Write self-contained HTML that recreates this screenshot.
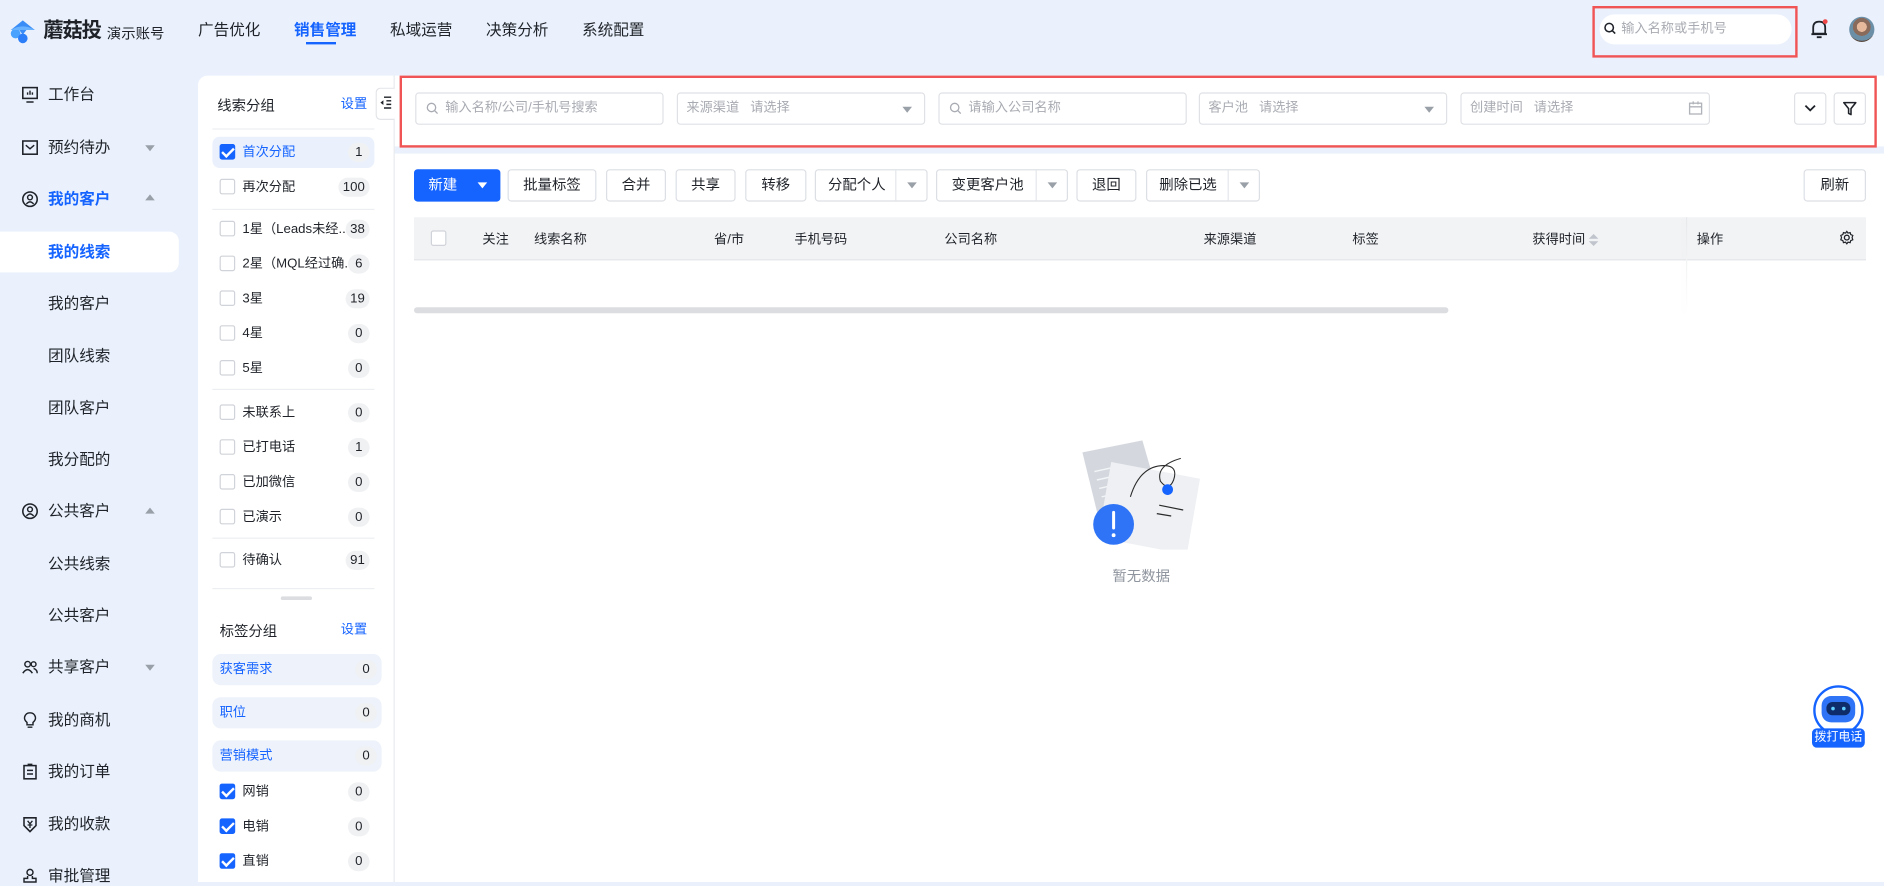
<!DOCTYPE html>
<html><head><meta charset="utf-8">
<style>
*{box-sizing:border-box;margin:0;padding:0}
html,body{width:1884px;height:882px;overflow:hidden;background:#eaf1fc}
body{font-family:"Liberation Sans","Noto Sans CJK SC",sans-serif;color:#1f2329}
#w{position:absolute;left:0;top:0;width:1570px;height:735px;transform:scale(1.2);transform-origin:0 0;font-size:12px}
.a{position:absolute}
.nav{position:absolute;top:16px;font-size:13px;color:#1f2329;line-height:18px}
.side{position:absolute;left:40px;font-size:13px;color:#1f2329;line-height:16px}
.sico{position:absolute;left:18px;width:14px;height:14px;margin-top:1px}
.caret{position:absolute;left:121px;width:0;height:0;border-left:4px solid transparent;border-right:4px solid transparent}
.li{position:absolute;left:177px;width:135px;height:26px}
.cb{position:absolute;left:6px;top:6px;width:13px;height:13px;border:1px solid #d0d3d9;border-radius:2px;background:#fff}
.cb.on{background:#1664ff;border-color:#1664ff}
.cb.on:after{content:"";position:absolute;left:3px;top:0px;width:4px;height:8px;border:solid #fff;border-width:0 2px 2px 0;transform:rotate(45deg)}
.li .t{position:absolute;left:25px;top:5px;font-size:11px;line-height:16px;color:#1f2329;white-space:nowrap}
.cnt{position:absolute;right:4px;top:5px;min-width:18px;height:16px;padding:0 4px;border-radius:8px;background:#f0f1f3;font-size:11px;text-align:center;line-height:16px;color:#1f2329}
.hr{position:absolute;left:177px;width:135px;height:1px;background:#eceef1}
.inp{position:absolute;top:77px;height:27px;border:1px solid #dfe1e5;border-radius:3px;background:#fff;font-size:11px;color:#a8abb2;line-height:25px}
.btn{position:absolute;top:141px;height:27px;border:1px solid #dcdfe4;border-radius:3px;background:#fff;font-size:12px;text-align:center;line-height:25px;color:#1f2329}
.dd{position:absolute;top:0;right:0;width:26px;height:25px;border-left:1px solid #e4e6ea}
.dd:after{content:"";position:absolute;left:9px;top:10px;border-left:4px solid transparent;border-right:4px solid transparent;border-top:5px solid #9aa0a8}
.th{position:absolute;top:193px;font-size:11px;line-height:14px;color:#1f2329}
.tag{position:absolute;left:177px;width:141px;height:26px;background:#edf2fb;border-radius:7px}
.tag .t{position:absolute;left:6px;top:5px;font-size:11px;line-height:16px;color:#1664ff}
</style></head><body><div id="w">
<svg class="a" style="left:7px;top:15px" width="26" height="22" viewBox="0 0 26 22"><path d="M2 10 L12 2 L22 10 L15 10 L12 14 L9 10Z" fill="#3a8cf6"/><circle cx="6" cy="13" r="4" fill="#4aa2ff"/><circle cx="12" cy="17" r="4" fill="#2c7ef8"/><path d="M2 10 Q12 4 22 10" fill="#68b2ff"/></svg>
<div class="a" style="left:36px;top:15px;font-size:17px;line-height:22px;font-weight:bold;color:#1f2329;letter-spacing:-1px">蘑菇投</div>
<div class="a" style="left:89px;top:20px;font-size:12px;line-height:16px;color:#1f2329">演示账号</div>
<div class="nav" style="left:165px">广告优化</div>
<div class="nav" style="left:245px;color:#1664ff;font-weight:bold">销售管理</div>
<div class="a" style="left:255px;top:35px;width:25px;height:2px;background:#1664ff"></div>
<div class="nav" style="left:325px">私域运营</div>
<div class="nav" style="left:405px">决策分析</div>
<div class="nav" style="left:485px">系统配置</div>
<div class="a" style="left:1327px;top:5px;width:171px;height:43px;border:2px solid #f05454"></div>
<div class="a" style="left:1333px;top:12px;width:160px;height:25px;border-radius:13px;background:#fff"></div>
<svg class="a" style="left:1336px;top:18px" width="12" height="12" viewBox="0 0 12 12"><circle cx="5" cy="5" r="3.5" fill="none" stroke="#1f2329" stroke-width="1.3"/><path d="M7.6 7.6 L10 10" stroke="#1f2329" stroke-width="1.3"/></svg>
<div class="a" style="left:1351px;top:17px;font-size:11px;line-height:14px;color:#a8abb2">输入名称或手机号</div>
<svg class="a" style="left:1508px;top:15px" width="16" height="18" viewBox="0 0 16 18"><path d="M3 13 L3 8 Q3 3 8 3 Q13 3 13 8 L13 13 Z M1.5 13.5 L14.5 13.5 M6 16 L10 16" fill="none" stroke="#1f2329" stroke-width="1.5"/><circle cx="13" cy="3" r="2" fill="#f04848"/></svg>
<div class="a" style="left:1541px;top:14px;width:21px;height:21px;border-radius:50%;background:radial-gradient(circle at 50% 40%,#e6b89c 0 25%,#8a6a5a 26% 45%,#6c8fa8 46% 70%,#5a4a3e 71%)"></div>
<svg class="sico" style="top:71px" viewBox="0 0 14 14"><rect x="1" y="1" width="12" height="9" fill="none" stroke="#1f2329" stroke-width="1.3"/><path d="M4 13 L10 13 M5 7 V5 M7 7 V3.5 M9 7 V5" stroke="#1f2329" stroke-width="1.2"/></svg>
<div class="side" style="top:71px">工作台</div>
<svg class="sico" style="top:115px" viewBox="0 0 14 14"><rect x="1" y="1.5" width="12" height="11" fill="none" stroke="#1f2329" stroke-width="1.3"/><path d="M3.5 5 L7 8 L10.5 5" fill="none" stroke="#1f2329" stroke-width="1.2"/></svg>
<div class="side" style="top:115px">预约待办</div>
<div class="caret" style="top:121px;border-top:5px solid #9aa0a8"></div>
<svg class="sico" style="top:158px" viewBox="0 0 14 14"><circle cx="7" cy="7" r="6" fill="none" stroke="#1f2329" stroke-width="1.3"/><circle cx="7" cy="5.5" r="2" fill="none" stroke="#1f2329" stroke-width="1.2"/><path d="M4 11 Q7 7.5 10 11" fill="none" stroke="#1f2329" stroke-width="1.2"/></svg>
<div class="side" style="top:158px;color:#1664ff;font-weight:bold">我的客户</div>
<div class="caret" style="top:162px;border-bottom:5px solid #9aa0a8"></div>
<div class="a" style="left:0;top:193px;width:149px;height:34px;background:#fff;border-radius:0 8px 8px 0"></div>
<div class="side" style="top:202px;color:#1664ff;font-weight:bold">我的线索</div>
<div class="side" style="top:245px">我的客户</div>
<div class="side" style="top:289px">团队线索</div>
<div class="side" style="top:332px">团队客户</div>
<div class="side" style="top:375px">我分配的</div>
<svg class="sico" style="top:418px" viewBox="0 0 14 14"><circle cx="7" cy="7" r="6" fill="none" stroke="#1f2329" stroke-width="1.3"/><circle cx="7" cy="5.5" r="2" fill="none" stroke="#1f2329" stroke-width="1.2"/><path d="M4 11 Q7 7.5 10 11" fill="none" stroke="#1f2329" stroke-width="1.2"/></svg>
<div class="side" style="top:418px">公共客户</div>
<div class="caret" style="top:423px;border-bottom:5px solid #9aa0a8"></div>
<div class="side" style="top:462px">公共线索</div>
<div class="side" style="top:505px">公共客户</div>
<svg class="sico" style="top:548px" viewBox="0 0 14 14"><circle cx="5" cy="4.5" r="2.3" fill="none" stroke="#1f2329" stroke-width="1.2"/><circle cx="10" cy="4.5" r="2" fill="none" stroke="#1f2329" stroke-width="1.2"/><path d="M1 12 Q5 6 9 12 M10 8 Q13 9 13 12" fill="none" stroke="#1f2329" stroke-width="1.2"/></svg>
<div class="side" style="top:548px">共享客户</div>
<div class="caret" style="top:554px;border-top:5px solid #9aa0a8"></div>
<svg class="sico" style="top:592px" viewBox="0 0 14 14"><path d="M4.5 9 Q2 7 2.5 4.5 Q3.5 1 7 1 Q10.5 1 11.5 4.5 Q12 7 9.5 9 L9.5 11 L4.5 11 Z M5 13 L9 13" fill="none" stroke="#1f2329" stroke-width="1.2"/></svg>
<div class="side" style="top:592px">我的商机</div>
<svg class="sico" style="top:635px" viewBox="0 0 14 14"><rect x="2" y="2" width="10" height="11" fill="none" stroke="#1f2329" stroke-width="1.3"/><path d="M5 1 H9 M4.5 6 H9.5 M4.5 9 H9.5" stroke="#1f2329" stroke-width="1.2"/></svg>
<div class="side" style="top:635px">我的订单</div>
<svg class="sico" style="top:679px" viewBox="0 0 14 14"><path d="M2 1.5 H12 V8 L7 13 L2 8 Z" fill="none" stroke="#1f2329" stroke-width="1.3"/><path d="M5 4 L7 6.5 L9 4 M7 6.5 V10 M5 7.5 H9" fill="none" stroke="#1f2329" stroke-width="1.1"/></svg>
<div class="side" style="top:679px">我的收款</div>
<svg class="sico" style="top:722px" viewBox="0 0 14 14"><circle cx="7" cy="4" r="2.5" fill="none" stroke="#1f2329" stroke-width="1.2"/><path d="M5 7 V9 H2 V12 H12 V9 H9 V7" fill="none" stroke="#1f2329" stroke-width="1.2"/></svg>
<div class="side" style="top:722px">审批管理</div>
<div class="a" style="left:165px;top:63px;width:164px;height:672px;background:#fff;border-radius:8px 0 0 0"></div>
<div class="a" style="left:328px;top:63px;width:1px;height:672px;background:#e6e8eb"></div>
<div class="a" style="left:313px;top:73px;width:16px;height:27px;border:1px solid #e2e4e8;border-right:none;border-radius:4px 0 0 4px;background:#fff"></div>
<svg class="a" style="left:316px;top:80px" width="11" height="11" viewBox="0 0 11 11"><path d="M4 1 H10 M6 4 H10 M6 7 H10 M4 10 H10" stroke="#1f2329" stroke-width="1.2"/><path d="M3.5 3.5 L1 5.5 L3.5 7.5Z" fill="#1f2329"/></svg>
<div class="a" style="left:181px;top:80px;font-size:12px;line-height:16px">线索分组</div>
<div class="a" style="left:284px;top:80px;font-size:11px;line-height:15px;color:#1664ff">设置</div>
<div class="hr" style="top:107px"></div>
<div class="li" style="top:114px;background:#eaf1fd;border-radius:6px"><div class="cb on"></div><div class="t" style="color:#1664ff">首次分配</div><div class="cnt">1</div></div>
<div class="li" style="top:143px"><div class="cb"></div><div class="t">再次分配</div><div class="cnt">100</div></div>
<div class="hr" style="top:174px"></div>
<div class="li" style="top:178px"><div class="cb"></div><div class="t">1星（Leads未经...</div><div class="cnt">38</div></div>
<div class="li" style="top:207px"><div class="cb"></div><div class="t">2星（MQL经过确...</div><div class="cnt">6</div></div>
<div class="li" style="top:236px"><div class="cb"></div><div class="t">3星</div><div class="cnt">19</div></div>
<div class="li" style="top:265px"><div class="cb"></div><div class="t">4星</div><div class="cnt">0</div></div>
<div class="li" style="top:294px"><div class="cb"></div><div class="t">5星</div><div class="cnt">0</div></div>
<div class="hr" style="top:324px"></div>
<div class="li" style="top:331px"><div class="cb"></div><div class="t">未联系上</div><div class="cnt">0</div></div>
<div class="li" style="top:360px"><div class="cb"></div><div class="t">已打电话</div><div class="cnt">1</div></div>
<div class="li" style="top:389px"><div class="cb"></div><div class="t">已加微信</div><div class="cnt">0</div></div>
<div class="li" style="top:418px"><div class="cb"></div><div class="t">已演示</div><div class="cnt">0</div></div>
<div class="hr" style="top:448px"></div>
<div class="li" style="top:454px"><div class="cb"></div><div class="t">待确认</div><div class="cnt">91</div></div>
<div class="hr" style="top:490px"></div>
<div class="a" style="left:234px;top:497px;width:26px;height:3px;border-radius:2px;background:#dcdde0"></div>
<div class="a" style="left:183px;top:518px;font-size:12px;line-height:16px">标签分组</div>
<div class="a" style="left:284px;top:518px;font-size:11px;line-height:15px;color:#1664ff">设置</div>
<div class="tag" style="top:545px"><div class="t">获客需求</div><div class="cnt">0</div></div>
<div class="tag" style="top:581px"><div class="t">职位</div><div class="cnt">0</div></div>
<div class="tag" style="top:617px"><div class="t">营销模式</div><div class="cnt">0</div></div>
<div class="li" style="top:647px"><div class="cb on"></div><div class="t">网销</div><div class="cnt">0</div></div>
<div class="li" style="top:676px"><div class="cb on"></div><div class="t">电销</div><div class="cnt">0</div></div>
<div class="li" style="top:705px"><div class="cb on"></div><div class="t">直销</div><div class="cnt">0</div></div>
<div class="a" style="left:329px;top:63px;width:1241px;height:59px;background:#fff"></div>
<div class="a" style="left:333px;top:63px;width:1231px;height:60px;border:2px solid #f05454"></div>
<div class="inp" style="left:346px;width:207px;padding-left:24px">输入名称/公司/手机号搜索</div>
<svg class="a" style="left:355px;top:85px" width="11" height="11" viewBox="0 0 12 12"><circle cx="5" cy="5" r="3.8" fill="none" stroke="#a8abb2" stroke-width="1.2"/><path d="M7.8 7.8 L10.5 10.5" stroke="#a8abb2" stroke-width="1.2"/></svg>
<div class="inp" style="left:564px;width:207px;padding-left:7px">来源渠道&nbsp;&nbsp;&nbsp;请选择</div>
<div class="a" style="left:752px;top:89px;border-left:4px solid transparent;border-right:4px solid transparent;border-top:5px solid #9aa0a8"></div>
<div class="inp" style="left:782px;width:207px;padding-left:24px">请输入公司名称</div>
<svg class="a" style="left:791px;top:85px" width="11" height="11" viewBox="0 0 12 12"><circle cx="5" cy="5" r="3.8" fill="none" stroke="#a8abb2" stroke-width="1.2"/><path d="M7.8 7.8 L10.5 10.5" stroke="#a8abb2" stroke-width="1.2"/></svg>
<div class="inp" style="left:999px;width:207px;padding-left:7px">客户池&nbsp;&nbsp;&nbsp;请选择</div>
<div class="a" style="left:1187px;top:89px;border-left:4px solid transparent;border-right:4px solid transparent;border-top:5px solid #9aa0a8"></div>
<div class="inp" style="left:1217px;width:208px;padding-left:7px">创建时间&nbsp;&nbsp;&nbsp;请选择</div>
<svg class="a" style="left:1407px;top:84px" width="12" height="12" viewBox="0 0 12 12"><rect x="1" y="2" width="10" height="9" fill="none" stroke="#b0b3b9" stroke-width="1.1"/><path d="M1 5 H11 M4 0.5 V3 M8 0.5 V3" stroke="#b0b3b9" stroke-width="1.1"/></svg>
<div class="a" style="left:1495px;top:77px;width:27px;height:27px;border:1px solid #dfe1e5;border-radius:3px;background:#fff"></div>
<svg class="a" style="left:1503px;top:86px" width="11" height="8" viewBox="0 0 11 8"><path d="M1.5 2 L5.5 6 L9.5 2" fill="none" stroke="#1f2329" stroke-width="1.5"/></svg>
<div class="a" style="left:1528px;top:77px;width:27px;height:27px;border:1px solid #dfe1e5;border-radius:3px;background:#fff"></div>
<svg class="a" style="left:1535px;top:84px" width="13" height="13" viewBox="0 0 13 13"><path d="M1.5 1.5 H11.5 L7.5 6.5 V11.5 L5.5 10.5 V6.5 Z" fill="none" stroke="#1f2329" stroke-width="1.3" stroke-linejoin="round"/></svg>
<div class="a" style="left:329px;top:128px;width:1241px;height:607px;background:#fff"></div>
<div class="btn" style="left:345px;width:72px;background:#1664ff;border-color:#1664ff;color:#fff;text-align:left;padding-left:11px">新建<span class="a" style="left:52px;top:10px;border-left:4px solid transparent;border-right:4px solid transparent;border-top:5px solid #fff"></span></div>
<div class="btn" style="left:423px;width:74px">批量标签</div>
<div class="btn" style="left:505px;width:50px">合并</div>
<div class="btn" style="left:563px;width:50px">共享</div>
<div class="btn" style="left:621px;width:51px">转移</div>
<div class="btn" style="left:679px;width:94px;text-align:left;padding-left:10px">分配个人<div class="dd"></div></div>
<div class="btn" style="left:780px;width:110px;text-align:left;padding-left:12px">变更客户池<div class="dd"></div></div>
<div class="btn" style="left:897px;width:50px">退回</div>
<div class="btn" style="left:955px;width:95px;text-align:left;padding-left:10px">删除已选<div class="dd"></div></div>
<div class="btn" style="left:1503px;width:52px">刷新</div>
<div class="a" style="left:345px;top:181px;width:1210px;height:36px;background:#f2f3f5;border-bottom:1px solid #e4e6ea"></div>
<div class="a" style="left:359px;top:192px;width:13px;height:13px;border:1px solid #d0d3d9;border-radius:2px;background:#fff"></div>
<div class="th" style="left:402px">关注</div>
<div class="th" style="left:445px">线索名称</div>
<div class="th" style="left:595px">省/市</div>
<div class="th" style="left:662px">手机号码</div>
<div class="th" style="left:787px">公司名称</div>
<div class="th" style="left:1003px">来源渠道</div>
<div class="th" style="left:1127px">标签</div>
<div class="th" style="left:1277px">获得时间</div>
<div class="a" style="left:1324px;top:195px;border-left:4px solid transparent;border-right:4px solid transparent;border-bottom:4px solid #c0c4cc"></div>
<div class="a" style="left:1324px;top:201px;border-left:4px solid transparent;border-right:4px solid transparent;border-top:4px solid #c0c4cc"></div>
<div class="a" style="left:1405px;top:181px;width:1px;height:80px;background:linear-gradient(#e6e8eb,#fff);box-shadow:-2px 0 4px rgba(0,0,0,.04)"></div>
<div class="th" style="left:1414px">操作</div>
<svg class="a" style="left:1533px;top:192px" width="12" height="12" viewBox="0 0 12 12"><circle cx="6" cy="6" r="2" fill="none" stroke="#1f2329" stroke-width="1.1"/><path d="M6 0.8 L7 2.2 L8.8 1.8 L9.3 3.5 L11 4.2 L10.4 6 L11 7.8 L9.3 8.5 L8.8 10.2 L7 9.8 L6 11.2 L5 9.8 L3.2 10.2 L2.7 8.5 L1 7.8 L1.6 6 L1 4.2 L2.7 3.5 L3.2 1.8 L5 2.2 Z" fill="none" stroke="#1f2329" stroke-width="1"/></svg>
<div class="a" style="left:345px;top:256px;width:862px;height:5px;border-radius:3px;background:#dcdde0"></div>
<svg class="a" style="left:895px;top:358px" width="110" height="100" viewBox="0 0 110 100">
<path d="M7 19 L57 9 L74 68 L22 80 Z" fill="#d4d8de"/>
<path d="M17 35 L35 31 M19 42 L37 38 M21 49 L39 45 M23 56 L38 53" stroke="#f2f4f6" stroke-width="1.2"/>
<path d="M31 27 L105 41 L94 104 L20 90 Z" fill="#eef0f3"/>
<path d="M47 56 Q55 30 75 30 Q87 30 83 42 Q79 52 72 43 Q68 30 89 24" fill="none" stroke="#2b2b2b" stroke-width="0.9"/>
<circle cx="78" cy="50" r="4.5" fill="#1664ff"/>
<path d="M71 63 L91 67 M69 70 L81 72" stroke="#2b2b2b" stroke-width="1"/>
<circle cx="33" cy="79" r="17" fill="#2f74f6"/>
<path d="M33 69 V82" stroke="#fff" stroke-width="2.5" stroke-linecap="round"/><circle cx="33" cy="88" r="1.6" fill="#fff"/>
</svg>
<div class="a" style="left:927px;top:472px;font-size:12px;line-height:16px;color:#8f959e">暂无数据</div>
<div class="a" style="left:1511px;top:571px;width:42px;height:42px;border-radius:50%;background:#fff;border:2px solid #1664ff"></div>
<div class="a" style="left:1518px;top:580px;width:28px;height:22px;border-radius:8px;background:#2f74f6"></div>
<div class="a" style="left:1522px;top:585px;width:20px;height:11px;border-radius:5px;background:#0f2c6a"></div>
<div class="a" style="left:1526px;top:589px;width:3px;height:3px;background:#5fd0ff;border-radius:50%"></div>
<div class="a" style="left:1535px;top:589px;width:3px;height:3px;background:#5fd0ff;border-radius:50%"></div>
<div class="a" style="left:1510px;top:607px;width:44px;height:16px;border-radius:4px;background:#1664ff;color:#fff;font-size:10px;text-align:center;line-height:16px">拨打电话</div>
</div></body></html>
